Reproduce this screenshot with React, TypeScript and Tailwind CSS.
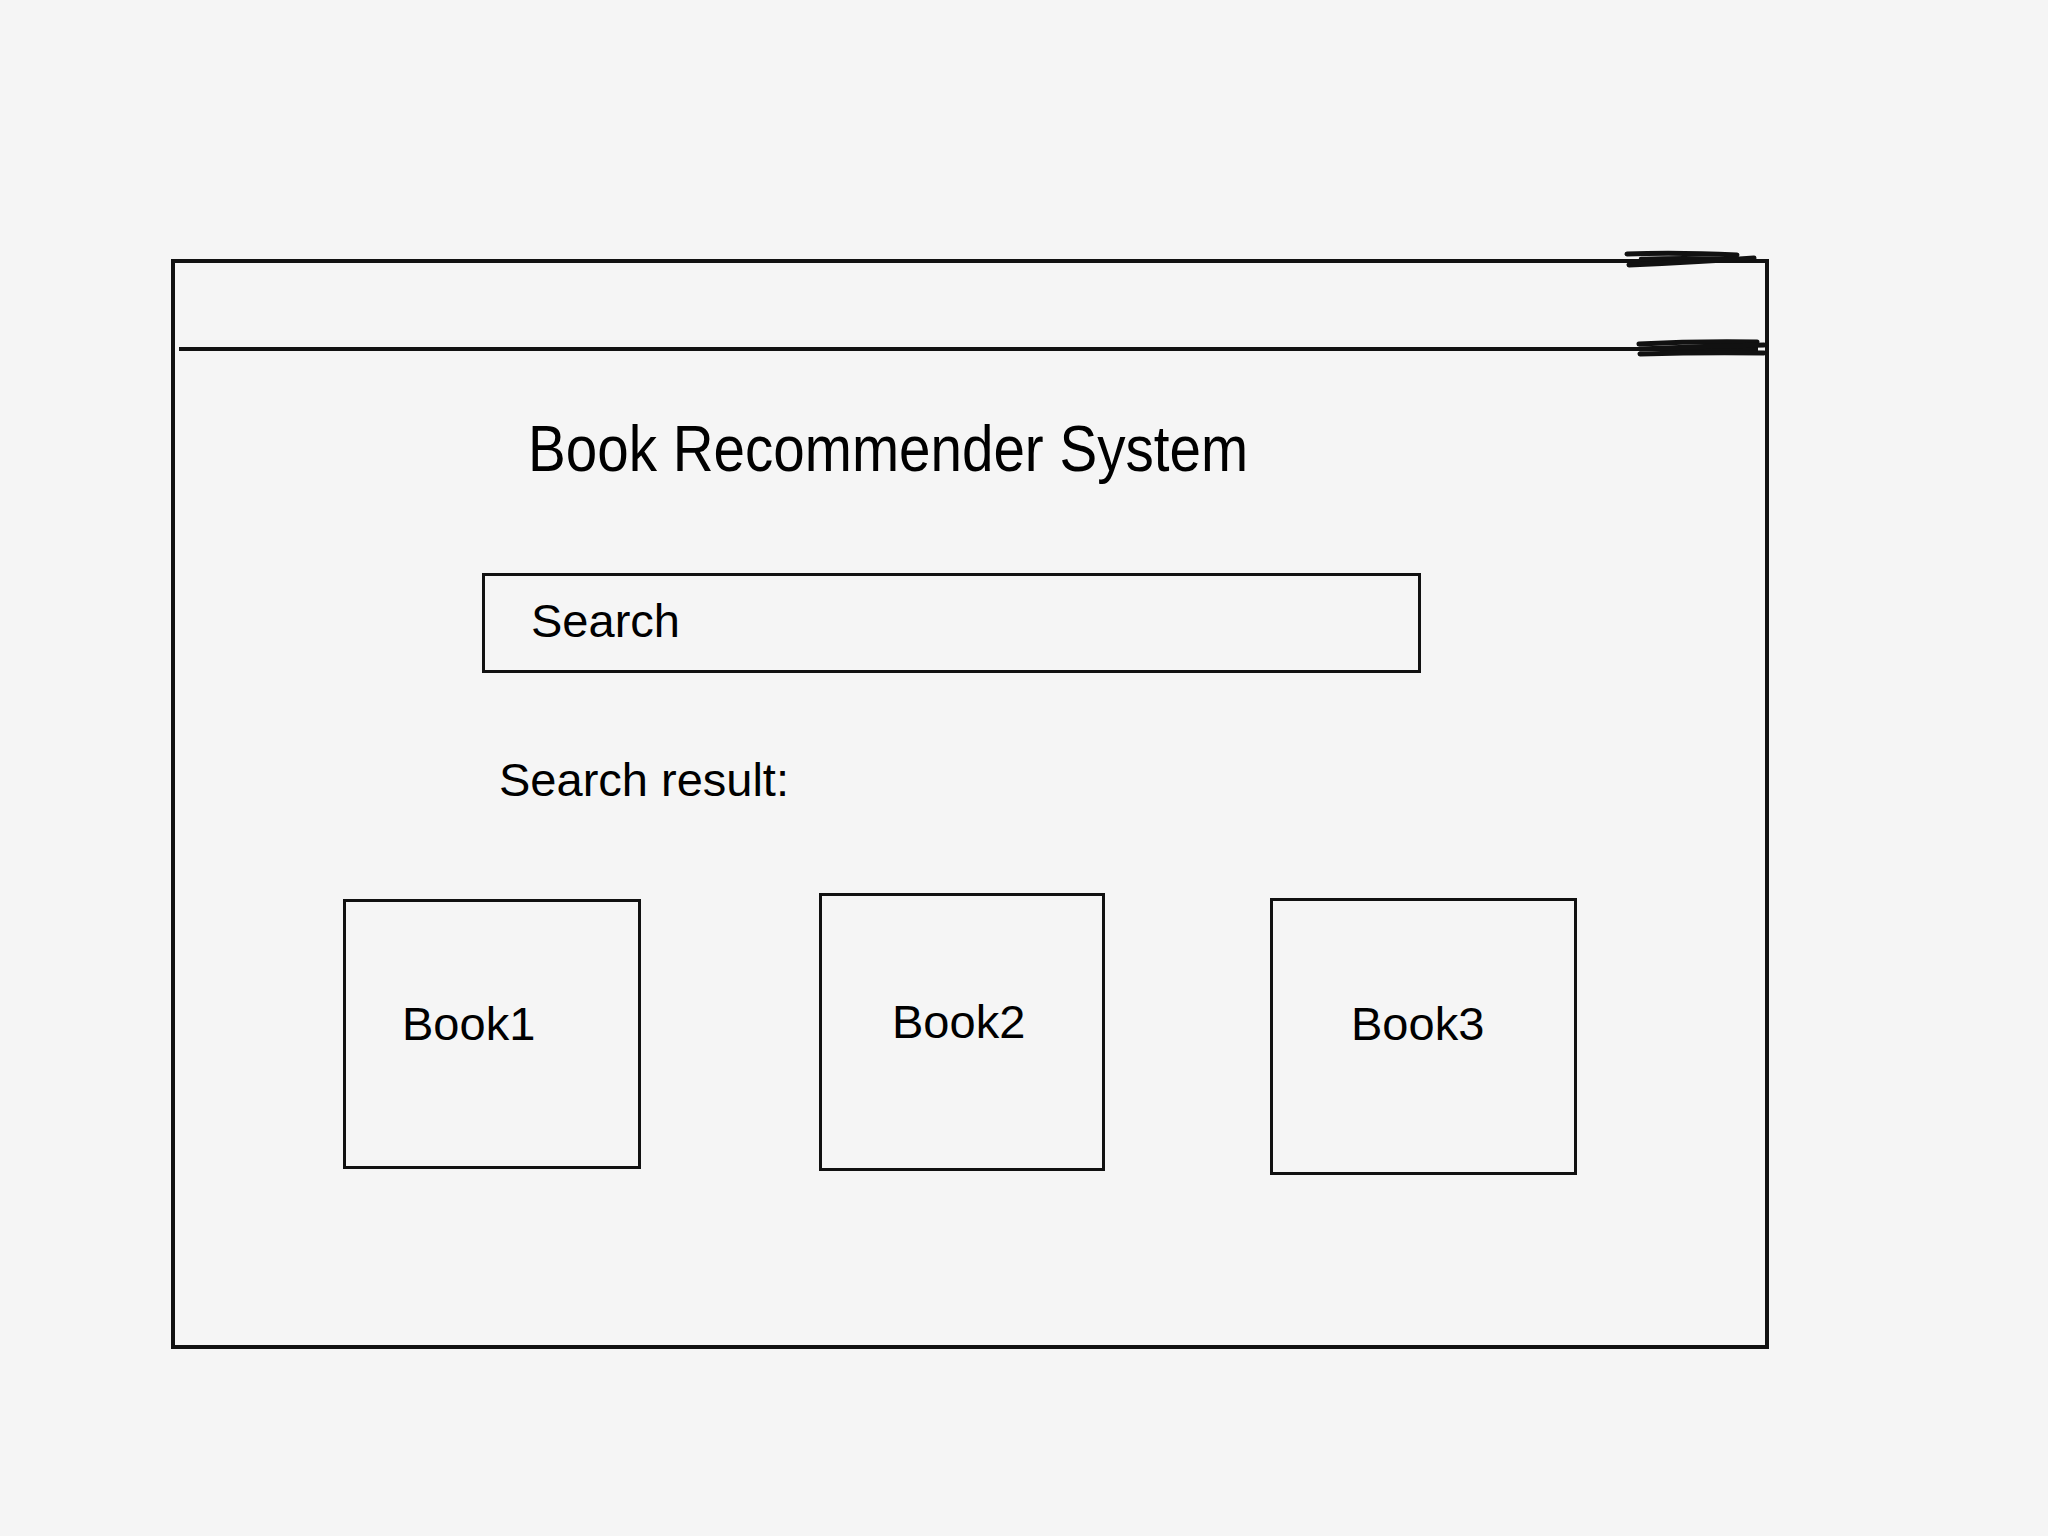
const books = [
  { id: 'b1', title: 'Book1', box: 'mt-[6px] w-[298px] h-[270px]', text: 'pt-[98px] pl-[56px]' },
  { id: 'b2', title: 'Book2', box: 'ml-[178px] w-[286px] h-[278px]', text: 'pt-[102px] pl-[70px]' },
  { id: 'b3', title: 'Book3', box: 'ml-[165px] mt-[5px] w-[307px] h-[277px]', text: 'pt-[99px] pl-[78px]' },
];

function Scribbles() {
  // hand-drawn overstrokes at the right end of the window bars
  return (
    <svg
      className="absolute left-[1441px] top-[-19px] pointer-events-none"
      width="160"
      height="120"
      viewBox="0 0 160 120"
      fill="none"
      stroke="#111"
      strokeLinecap="round"
    >
      <path d="M11 10 Q60 8 121 11" strokeWidth="5" />
      <path d="M25 15 Q80 13 131 16" strokeWidth="4.5" />
      <path d="M13 21 Q80 18 138 14" strokeWidth="5" />
      <path d="M23 100 Q80 97 141 98" strokeWidth="5" />
      <path d="M24 105 Q90 102 148 101" strokeWidth="5" />
      <path d="M24 110 Q90 108 148 109" strokeWidth="5" />
    </svg>
  );
}

export default function App() {
  return (
    <div className="w-[2048px] h-[1536px] bg-[#f5f5f5] pt-[259px] pl-[171px] font-['Liberation_Sans',Arial,sans-serif] text-black">
      <div className="relative box-border w-[1598px] h-[1090px] border-4 border-[#111] flex flex-col">
        <div className="h-[84px]" />
        <div className="h-[4px] ml-[4px] mr-[7px] bg-[#111]" />

        <div className="mt-[66px] ml-[353px] h-[64px]">
          <span className="inline-block origin-left scale-x-[0.884] text-[64px] leading-none whitespace-nowrap">
            Book Recommender System
          </span>
        </div>

        <div className="mt-[92px] ml-[307px] box-border w-[939px] h-[100px] border-[3px] border-[#111] pt-[21px] pl-[46px]">
          <div className="text-[47px] leading-none">Search</div>
        </div>

        <div className="mt-[83px] ml-[324px] text-[47px] leading-none">Search result:</div>

        <div className="mt-[90px] ml-[168px] flex items-start">
          {books.map((b) => (
            <div key={b.id} className={`box-border border-[3px] border-[#111] ${b.box}`}>
              <div className={`text-[47px] leading-none ${b.text}`}>{b.title}</div>
            </div>
          ))}
        </div>

        <Scribbles />
      </div>
    </div>
  );
}
